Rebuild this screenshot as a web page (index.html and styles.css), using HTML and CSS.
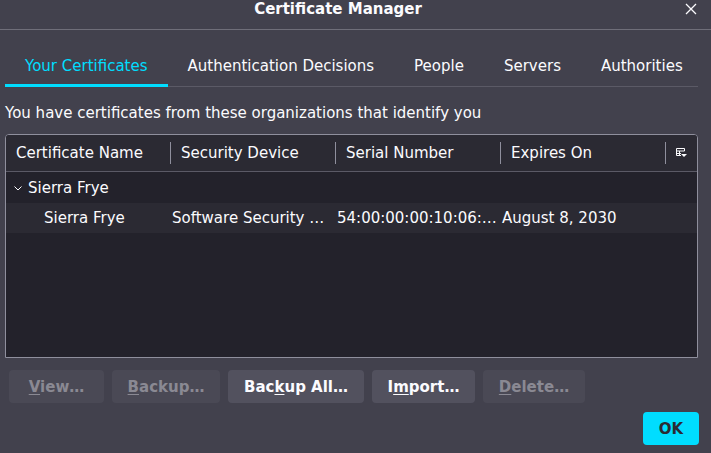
FILE: index.html
```html
<!DOCTYPE html>
<html>
<head>
<meta charset="utf-8">
<link rel="stylesheet" href="styles.css">
</head>
<body>
<div class="dialog">
  <div class="titlebar">
    <span class="title">Certificate Manager</span>
    <svg class="close" width="12" height="12" viewBox="0 0 12 12"><path d="M1 1L11 11M11 1L1 11" stroke="#fbfbfe" stroke-width="1.3" fill="none"/></svg>
  </div>
  <div class="content">
    <div class="tabs">
      <div class="tab active">Your Certificates</div>
      <div class="tab">Authentication Decisions</div>
      <div class="tab">People</div>
      <div class="tab">Servers</div>
      <div class="tab">Authorities</div>
    </div>
    <p class="intro">You have certificates from these organizations that identify you</p>
    <div class="tree">
      <div class="row head">
        <div class="cell">Certificate Name</div>
        <div class="cell sep">Security Device</div>
        <div class="cell sep">Serial Number</div>
        <div class="cell sep">Expires On</div>
        <div class="cell sep picker">
          <svg width="11" height="10" viewBox="0 0 11 10"><path d="M0.5 0.5H8.5V3M0.5 0.5V7.5H5M0.5 3H8.5M3.5 3V7.5M0.5 5.5H5" stroke="#fbfbfe" fill="none"/><path d="M5 6H11L8 9Z" fill="#fbfbfe"/></svg>
        </div>
      </div>
      <div class="row group">
        <div class="cell span"><svg class="twisty" width="8" height="5" viewBox="0 0 8 5"><path d="M0.5 0.5L4 4L7.5 0.5" stroke="#fbfbfe" stroke-width="1" fill="none"/></svg>Sierra Frye</div>
      </div>
      <div class="row child">
        <div class="cell indent">Sierra Frye</div>
        <div class="cell">Software Security …</div>
        <div class="cell">54:00:00:00:10:06:…</div>
        <div class="cell">August 8, 2030</div>
      </div>
    </div>
    <div class="buttons">
      <button class="btn disabled w-view"><u>V</u>iew…</button>
      <button class="btn disabled w-backup"><u>B</u>ackup…</button>
      <button class="btn w-all">Bac<u>k</u>up All…</button>
      <button class="btn w-import">I<u>m</u>port…</button>
      <button class="btn disabled w-delete"><u>D</u>elete…</button>
    </div>
    <div class="footer">
      <button class="ok">OK</button>
    </div>
  </div>
</div>
</body>
</html>
```
FILE: styles.css
```css
html, body {
  margin: 0;
  padding: 0;
  background: #42414d;
  width: 711px;
  height: 453px;
  overflow: hidden;
  font-family: "DejaVu Sans", sans-serif;
  color: #fbfbfe;
}
.dialog {
  display: flex;
  flex-direction: column;
  height: 453px;
}
.titlebar {
  border-bottom: 1px solid #6f6e79;
  position: relative;
  display: flex;
  justify-content: center;
  box-sizing: border-box;
  height: 30px;
}
.title {
  font-weight: bold;
  font-size: 15px;
  line-height: 18px;
  margin-left: -35px;
}
.close {
  position: absolute;
  right: 14px;
  top: 3px;
}
.content {
  padding: 0 13px 0 5px;
  display: flex;
  flex-direction: column;
}
.tabs {
  display: flex;
  margin-top: 17px;
  border-bottom: 1px solid #5b5a66;
  overflow: visible;
}
.tab {
  flex-shrink: 0;
  white-space: nowrap;
  font-size: 15px;
  line-height: 18px;
  padding: 10px 20px 9px 20px;
  border-bottom: 3px solid transparent;
  margin-bottom: -1px;
  color: #fbfbfe;
}
.tab.active {
  color: #00ddff;
  border-bottom-color: #00ddff;
}
.intro {
  margin: 17px 0 0 0;
  font-size: 15px;
  line-height: 18px;
}
.tree {
  margin-top: 12px;
  height: 224px;
  box-sizing: border-box;
  border: 1px solid #8f8f9d;
  border-radius: 4px 4px 0 0;
  background: #23222b;
  overflow: hidden;
}
.row {
  display: grid;
  grid-template-columns: 164px 165px 165px 165px 1fr;
  font-size: 15px;
  align-items: center;
}
.head {
  height: 36px;
  background: #2b2a33;
  border-bottom: 1px solid #5b5a66;
}
.head .cell {
  padding-left: 10px;
  line-height: 22px;
}
.head .sep {
  border-left: 1px solid #8f8f9d;
}
.picker {
  display: flex;
  align-items: center;
  justify-content: center;
  height: 22px;
  padding-left: 0 !important;
}
.group {
  height: 31px;
}
.span {
  grid-column: 1 / -1;
  padding-left: 8px;
  display: flex;
  align-items: center;
}
.twisty {
  margin-right: 6px;
  margin-top: 2px;
}
.child {
  height: 30px;
  background: #2b2a33;
}
.child .cell {
  padding-left: 2px;
  white-space: nowrap;
  overflow: hidden;
}
.child .indent {
  padding-left: 38px;
}
.buttons {
  display: flex;
  gap: 8px;
  margin-top: 12px;
  padding-left: 4px;
}
.btn {
  font-family: "DejaVu Sans", sans-serif;
  font-weight: bold;
  font-size: 15px;
  height: 33px;
  border: none;
  border-radius: 4px;
  background: #52515e;
  color: #fbfbfe;
  padding: 0;
  flex-shrink: 0;
}
.w-view { width: 95px; }
.w-backup { width: 108px; }
.w-all { width: 136px; }
.w-import { width: 103px; }
.w-delete { width: 102px; }
.btn.disabled {
  background: #4a4955;
  color: #8a8993;
}
.btn u {
  text-underline-offset: 2px;
}
.footer {
  display: flex;
  justify-content: flex-end;
  margin-top: 9px;
  margin-right: -1px;
}
.ok {
  font-family: "DejaVu Sans", sans-serif;
  font-weight: bold;
  font-size: 15px;
  width: 56px;
  height: 33px;
  border: none;
  border-radius: 4px;
  background: #00ddff;
  color: #2b2a33;
}
```
